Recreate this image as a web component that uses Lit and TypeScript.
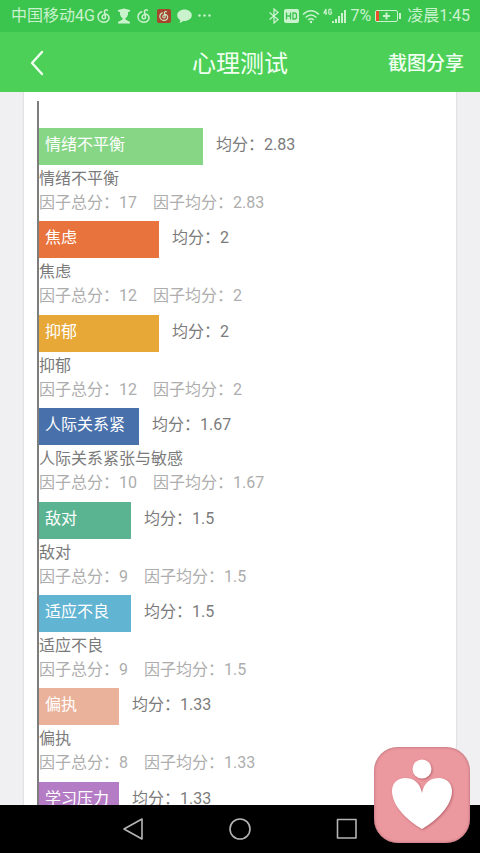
import { LitElement, html, css, svg } from "lit";
import { customElement } from "lit/decorators.js";
import { styleMap } from "lit/directives/style-map.js";

interface Factor {
  label: string;
  name: string;
  total: number;
  mean: string;
  color: string;
  share: number;
}

const factors: Factor[] = [
  { label: "情绪不平衡", name: "情绪不平衡", total: 17, mean: "2.83", color: "#86d686", share: 41 },
  { label: "焦虑", name: "焦虑", total: 12, mean: "2", color: "#e9733d", share: 30 },
  { label: "抑郁", name: "抑郁", total: 12, mean: "2", color: "#e8a838", share: 30 },
  { label: "人际关系紧", name: "人际关系紧张与敏感", total: 10, mean: "1.67", color: "#4871ab", share: 25 },
  { label: "敌对", name: "敌对", total: 9, mean: "1.5", color: "#5ab491", share: 23 },
  { label: "适应不良", name: "适应不良", total: 9, mean: "1.5", color: "#62b4d3", share: 23 },
  { label: "偏执", name: "偏执", total: 8, mean: "1.33", color: "#eab29a", share: 20 },
  { label: "学习压力", name: "学习压力", total: 8, mean: "1.33", color: "#b57cc6", share: 20 },
];

const swirl = svg`<path d="M10.400 1.300C8.800 .3 7.200 1.200 7.500 3L8.500 8C8.700 10.200 5.200 10.500 5.100 8.100C5 5.300 9.200 4.200 11 6.200C13.400 9 11.200 13.200 7 13.200C3.200 13.200 1 10.600 1 7.800C1 5.400 2.400 3.500 4.800 2.700" fill="none" stroke="currentColor" stroke-width="1.500" stroke-linecap="round"/>`;

@customElement("status-bar")
class StatusBar extends LitElement {
  static styles = css`
    :host {
      display: flex;
      align-items: center;
      justify-content: space-between;
      height: 32px;
      padding: 0 10px 0 11px;
      background: #3bc54e;
      color: #c9f2cd;
      font-size: 16px;
      line-height: 24px;
      white-space: nowrap;
    }
    .side {
      display: flex;
      align-items: center;
    }
    .notices {
      gap: 6px;
    }
    .carrier {
      margin-right: -4px;
    }
    .signals {
      gap: 3px;
    }
    .clock {
      margin-left: 2px;
    }
    svg {
      display: block;
      flex: none;
    }
  `;

  render() {
    return html`
      <div class="side notices">
        <span class="carrier">中国移动4G</span>
        <svg width="14" height="14" viewBox="0 0 14 14">${swirl}</svg>
        <svg width="14" height="16" viewBox="0 0 14 16" fill="currentColor">
          <path d="M1 2L7 .5L13 2V3.500L11 4V6.500Q10.500 9 8.500 10V11.500L13 14V15.500H1V14L5.500 11.500V10Q3.500 9 3 6.500V4L1 3.500Z" />
        </svg>
        <svg width="14" height="14" viewBox="0 0 14 14">${swirl}</svg>
        <svg width="14" height="14" viewBox="0 0 14 14">
          <rect width="14" height="14" rx="2" fill="#a8452f" />
          <g transform="translate(2.100 1.900) scale(.72)">${swirl}</g>
        </svg>
        <svg width="15" height="14" viewBox="0 0 15 14" fill="currentColor">
          <path d="M7.500 .5C3.500 .5 .2 3 .2 6.200C.2 8.300 1.500 10 3.300 11C3.300 12.200 2.800 13 2.200 13.700C4.400 13.500 5.400 12.700 6.200 12C11 12.400 14.800 9.600 14.800 6.200C14.800 3 11.500 .5 7.500 .5Z" />
        </svg>
        <svg width="13" height="14" viewBox="0 0 13 14" fill="currentColor">
          <circle cx="1.500" cy="6.500" r="1.200" /><circle cx="6.500" cy="6.500" r="1.200" /><circle cx="11.500" cy="6.500" r="1.200" />
        </svg>
      </div>
      <div class="side signals">
        <svg width="12" height="16" viewBox="0 0 12 16" fill="none" stroke="currentColor" stroke-width="1.300">
          <path d="M.5 4.500L9 11.500L5 15V1L9 4.500L.5 11.500" />
        </svg>
        <svg width="15" height="14" viewBox="0 0 15 14">
          <rect width="15" height="14" rx="2" fill="currentColor" />
          <path d="M2.500 3.500V10.500M6.500 3.500V10.500M2.500 7H6.500M9 4V10H10.500Q12.500 10 12.500 8V6Q12.500 4 10.500 4Z" fill="none" stroke="#3bc54e" stroke-width="1.300" />
        </svg>
        <svg width="18" height="15" viewBox="0 0 18 15" fill="none" stroke="currentColor" stroke-width="1.600">
          <path d="M1 5.500Q9 -2 17 5.500M3.600 8.500Q9 3.500 14.400 8.500M6.200 11Q9 8.500 11.800 11" />
          <circle cx="9" cy="13" r="1.200" fill="currentColor" stroke="none" />
        </svg>
        <svg width="24" height="16" viewBox="0 0 24 16">
          <path d="M3 7V1L.8 5H4.200M8.500 2.500Q8 1.200 7 1.200Q5.700 1.200 5.700 3.900Q5.700 6.500 7 6.500Q8.500 6.500 8.500 4.500V4H7" fill="none" stroke="currentColor" stroke-width="1.200" />
          <path d="M9 13h2v2h-2zM12 11h2v4h-2zM15 8h2v7h-2zM18 5h2v10h-2zM21 2h2v13h-2z" fill="currentColor" />
        </svg>
        <span>7%</span>
        <svg width="28" height="14" viewBox="0 0 28 14">
          <rect x="1.500" y="1.500" width="22" height="11" rx="1.500" fill="none" stroke="currentColor" />
          <path d="M2 2h3v10h-3z" fill="#e8502c" />
          <path d="M12.500 3.500V10.500M9 7H16M26 4V10" stroke="currentColor" stroke-width="2" />
        </svg>
        <span class="clock">凌晨1:45</span>
      </div>
    `;
  }
}

@customElement("factor-chart")
class FactorChart extends LitElement {
  static styles = css`
    :host {
      display: block;
    }
    .list {
      display: grid;
      grid-auto-rows: 1fr;
      min-height: 747px;
      margin: 0;
      padding: 27px 0 0;
      border-left: 2px solid #7d7d7d;
      list-style: none;
      color: #7b7b7b;
      font-size: 16px;
      line-height: 24px;
    }
    .row {
      display: flex;
      gap: 13px;
      margin-bottom: 2px;
      line-height: 33px;
      white-space: nowrap;
    }
    .bar {
      box-sizing: border-box;
      height: 37px;
      padding-left: 6px;
      color: #fff;
      overflow: hidden;
    }
    .name,
    .detail {
      margin: 0;
    }
    .detail {
      display: flex;
      gap: 16px;
      color: #adadad;
    }
  `;

  render() {
    return html`
      <ul class="list">
        ${factors.map(
          (f) => html`
            <li>
              <div class="row">
                <div class="bar" style=${styleMap({ width: `${f.share}%`, background: f.color })}>${f.label}</div>
                <span>均分：${f.mean}</span>
              </div>
              <p class="name">${f.name}</p>
              <p class="detail"><span>因子总分：${f.total}</span><span>因子均分：${f.mean}</span></p>
            </li>
          `
        )}
      </ul>
    `;
  }
}

@customElement("app-root")
class AppRoot extends LitElement {
  static styles = css`
    :host {
      display: flex;
      flex-direction: column;
      height: 100vh;
      background: #f0f0f3;
      font-family: Roboto, "Noto Sans CJK SC", sans-serif;
    }
    button {
      display: flex;
      align-items: center;
      justify-content: center;
      padding: 0;
      border: 0;
      background: none;
      color: inherit;
      font: inherit;
      cursor: pointer;
    }
    svg {
      display: block;
    }
    .header {
      display: grid;
      grid-template-columns: 1fr auto 1fr;
      align-items: center;
      flex: none;
      box-sizing: border-box;
      height: 60px;
      padding: 3px 16px 0;
      background: #4cd058;
      color: #f0fff0;
    }
    .back {
      width: 42px;
      height: 40px;
    }
    .title {
      margin: 0;
      font-size: 24px;
      font-weight: 400;
      line-height: 32px;
    }
    .share {
      justify-self: end;
      font-size: 19px;
      font-weight: 500;
      line-height: 32px;
    }
    .content {
      flex: 1;
      min-height: 0;
      overflow: hidden;
    }
    .card {
      margin: 0 24px;
      padding: 9px 17px 0 13px;
      background: #fff;
      box-shadow: 0 0 2px #c4c4c8;
    }
    .nav {
      display: flex;
      flex: none;
      justify-content: center;
      gap: 59px;
      background: #000;
      color: #b4b4b4;
    }
    .nav button {
      width: 48px;
      height: 48px;
    }
    .badge {
      position: fixed;
      right: 10px;
      bottom: 10px;
      width: 96px;
      height: 96px;
      border-radius: 24px;
      background: #ec989f;
      box-shadow: inset 0 0 3px #a8646c;
    }
    .heart {
      filter: drop-shadow(1px 1px 1px #b8666e);
    }
  `;

  render() {
    return html`
      <status-bar></status-bar>
      <header class="header">
        <button class="back" aria-label="返回">
          <svg width="14" height="28" viewBox="0 0 14 28" fill="none" stroke="currentColor" stroke-width="2.400" stroke-linecap="round" stroke-linejoin="round">
            <path d="M12 2L2 13L12 24" />
          </svg>
        </button>
        <h1 class="title">心理测试</h1>
        <button class="share">截图分享</button>
      </header>
      <main class="content">
        <section class="card"><factor-chart></factor-chart></section>
      </main>
      <nav class="nav">
        <button aria-label="返回">
          <svg width="24" height="24" viewBox="0 0 24 24" fill="none" stroke="currentColor" stroke-width="1.600" stroke-linejoin="round">
            <path d="M21 2V22L3 12Z" />
          </svg>
        </button>
        <button aria-label="主页">
          <svg width="24" height="24" viewBox="0 0 24 24" fill="none" stroke="currentColor" stroke-width="1.600">
            <circle cx="12" cy="12" r="10" />
          </svg>
        </button>
        <button aria-label="最近任务">
          <svg width="24" height="24" viewBox="0 0 24 24" fill="none" stroke="currentColor" stroke-width="1.600" stroke-linejoin="round">
            <rect x="2.500" y="2.500" width="18.500" height="18.500" />
          </svg>
        </button>
      </nav>
      <button class="badge" aria-label="壹心理">
        <svg class="heart" width="96" height="96" viewBox="0 0 96 96" fill="#fff">
          <circle cx="48" cy="22" r="9.500" />
          <path d="M48 82C33 73 18 59 18 44C18 36 24 31 31 31C39 31 46 35 48 46C50 35 57 31 65 31C72 31 78 36 78 44C78 59 63 73 48 82Z" />
        </svg>
      </button>
    `;
  }
}
